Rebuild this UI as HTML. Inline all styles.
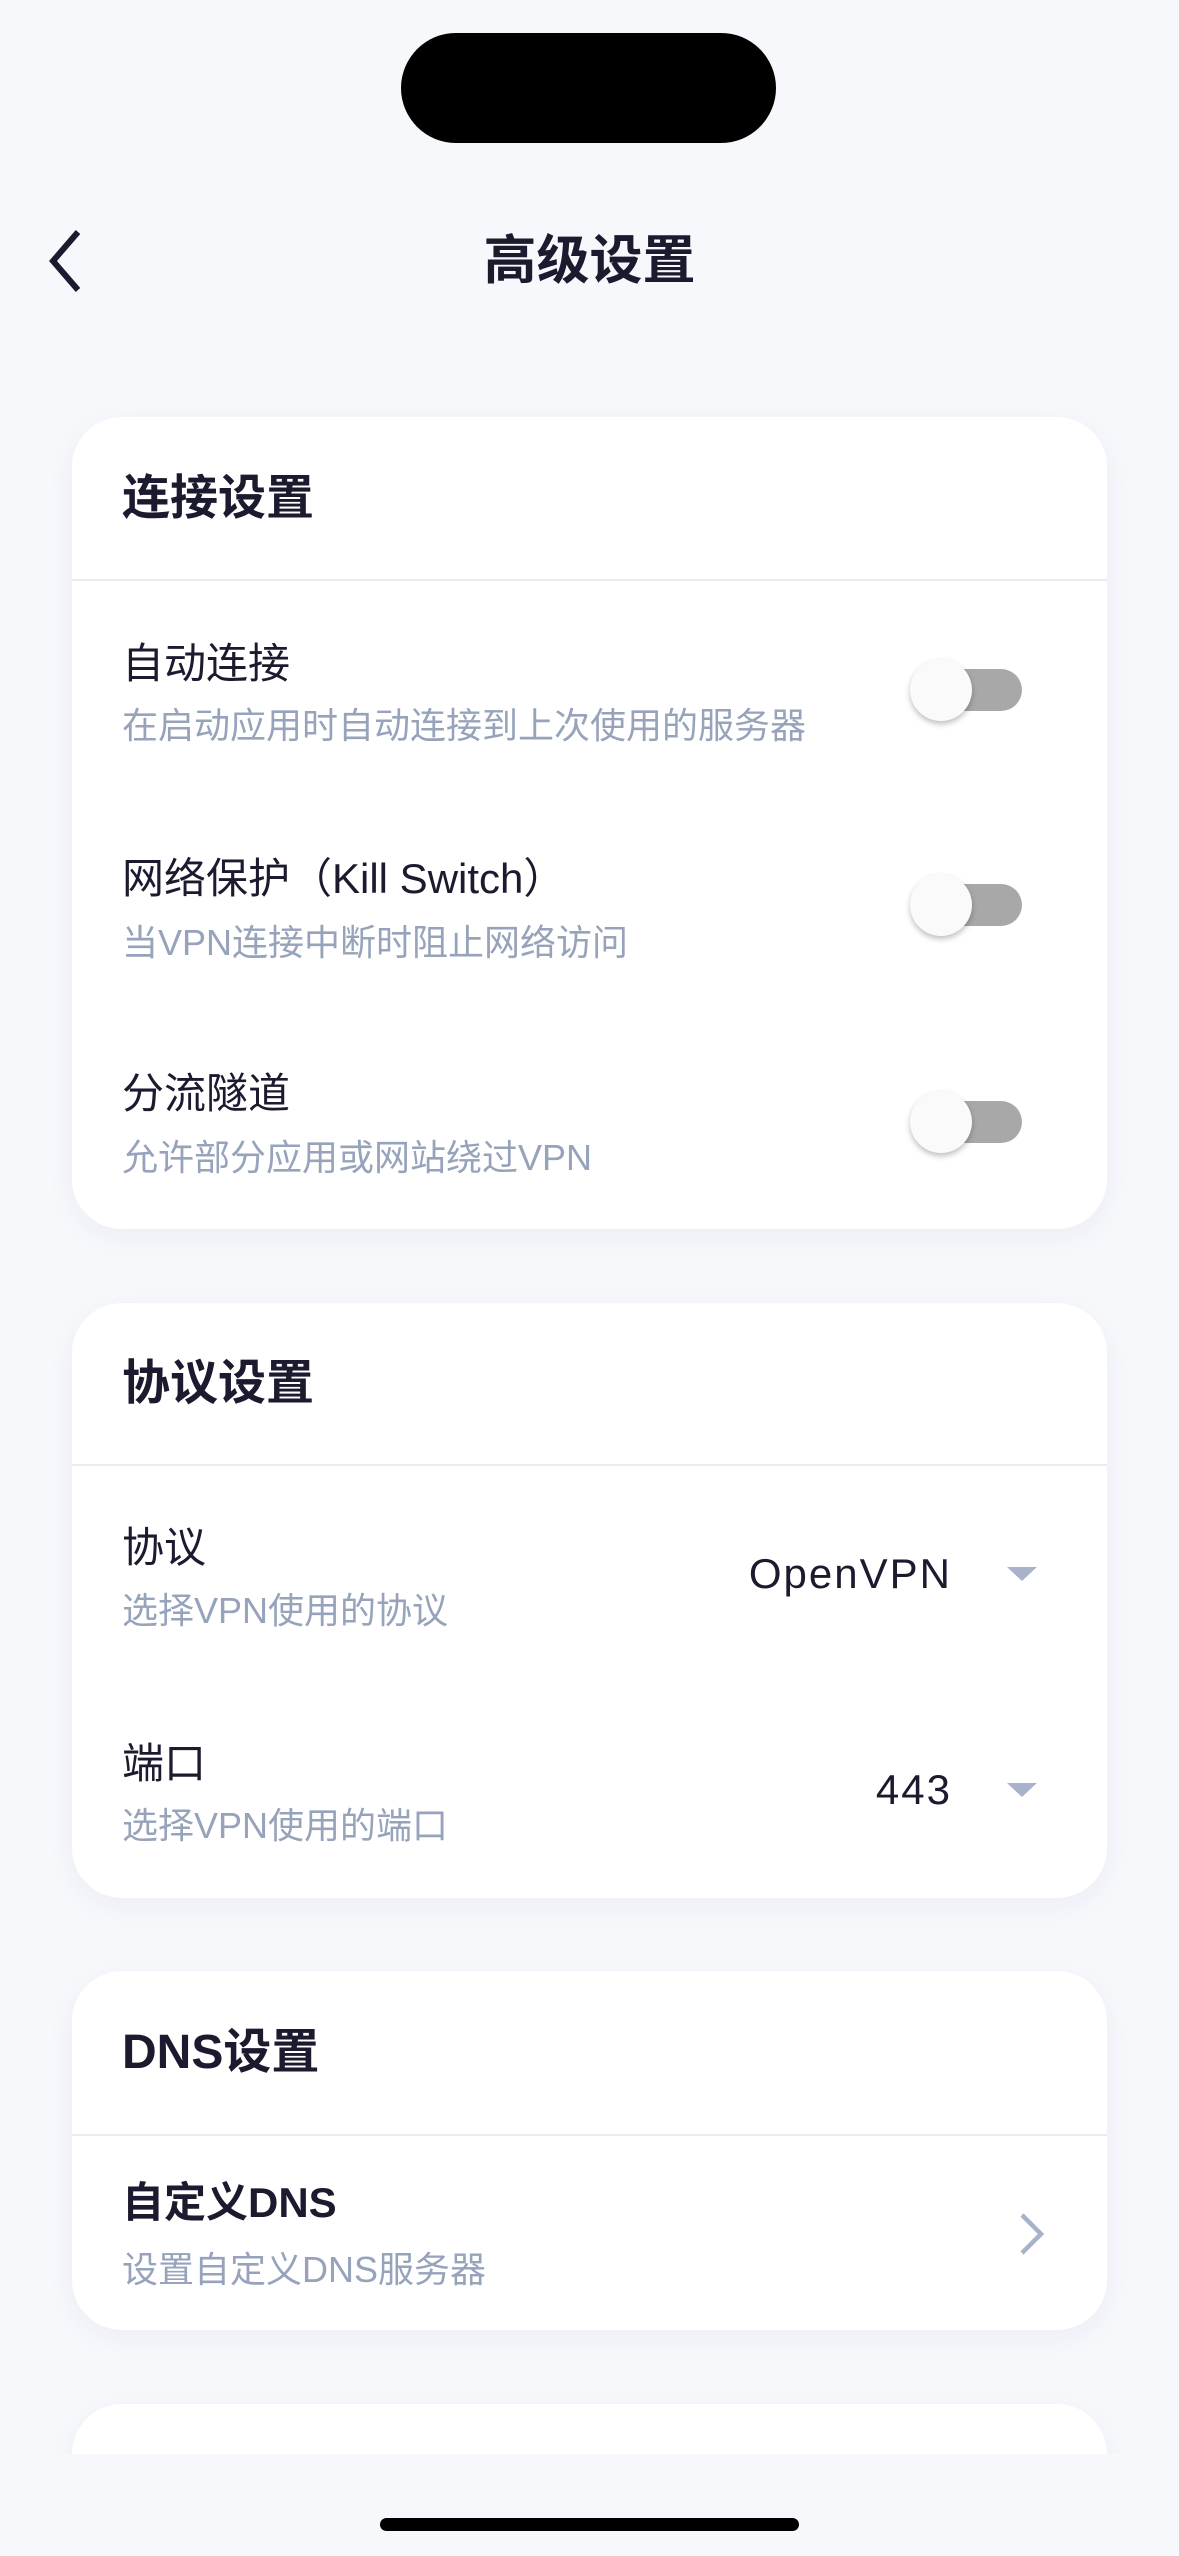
<!DOCTYPE html>
<html style="overflow:hidden;height:2556px"><head><meta charset="utf-8"><style>
*{margin:0;padding:0;box-sizing:border-box}
body{width:1179px;height:2556px;background:#f7f8fc;position:relative;overflow:hidden;font-family:"Liberation Sans","Noto Sans CJK SC",sans-serif;color:#1b1a2e}
.a{position:absolute}
.card{position:absolute;left:72px;width:1035px;background:#fff;border-radius:50px;box-shadow:0 8px 30px rgba(30,40,80,0.05)}
.h{position:absolute;left:50px;font-size:48px;font-weight:bold;line-height:1;transform:translateY(-50%)}
.div{position:absolute;left:0;right:0;height:2px;background:#ececf0}
.t{position:absolute;left:50px;font-size:42px;line-height:1;transform:translateY(-50%)}
.s{position:absolute;left:50px;font-size:36px;line-height:1;color:#97a3bb;transform:translateY(-50%)}
.trk{position:absolute;left:868px;width:82px;height:42px;border-radius:21px;background:#a8a8a8;transform:translateY(-50%)}
.knob{position:absolute;left:838px;width:62px;height:62px;border-radius:50%;background:#fafafa;box-shadow:0 3px 6px rgba(0,0,0,0.25);transform:translateY(-50%)}
.val{position:absolute;right:155px;font-size:42px;line-height:1;transform:translateY(-50%);letter-spacing:2px}
.tri{position:absolute;left:935px;width:0;height:0;border-left:15px solid transparent;border-right:15px solid transparent;border-top:14px solid #a9b2cb;transform:translateY(-50%)}
</style></head><body>
<div class="a" style="left:401px;top:33px;width:375px;height:110px;border-radius:55px;background:#000"></div>
<svg class="a" style="left:40px;top:228px" width="50" height="66" viewBox="0 0 50 66"><path d="M38 4 L13 33 L38 62" fill="none" stroke="#1b1a2e" stroke-width="6"/></svg>
<div class="a" style="left:0;width:1179px;top:261px;transform:translateY(-50%);text-align:center;font-size:53px;font-weight:bold;line-height:1">高级设置</div>

<div class="card" style="top:417px;height:812px">
<div class="h" style="top:82px">连接设置</div>
<div class="div" style="top:162px"></div>
<div class="t" style="top:247px">自动连接</div>
<div class="s" style="top:309px">在启动应用时自动连接到上次使用的服务器</div>
<div class="trk" style="top:273px"></div><div class="knob" style="top:273px"></div>
<div class="t" style="top:462px">网络保护（Kill Switch）</div>
<div class="s" style="top:526px">当VPN连接中断时阻止网络访问</div>
<div class="trk" style="top:488px"></div><div class="knob" style="top:488px"></div>
<div class="t" style="top:677px">分流隧道</div>
<div class="s" style="top:741px">允许部分应用或网站绕过VPN</div>
<div class="trk" style="top:705px"></div><div class="knob" style="top:705px"></div>
</div>

<div class="card" style="top:1303px;height:595px">
<div class="h" style="top:81px">协议设置</div>
<div class="div" style="top:161px"></div>
<div class="t" style="top:245px">协议</div>
<div class="s" style="top:308px">选择VPN使用的协议</div>
<div class="val" style="top:271px">OpenVPN</div><div class="tri" style="top:271px"></div>
<div class="t" style="top:461px">端口</div>
<div class="s" style="top:523px">选择VPN使用的端口</div>
<div class="val" style="top:487px">443</div><div class="tri" style="top:487px"></div>
</div>

<div class="card" style="top:1971px;height:359px">
<div class="h" style="top:82px">DNS设置</div>
<div class="div" style="top:163px"></div>
<div class="t" style="top:232px;font-weight:bold">自定义DNS</div>
<div class="s" style="top:299px">设置自定义DNS服务器</div>
<svg class="a" style="left:944px;top:240px" width="30" height="46" viewBox="0 0 30 46"><path d="M6 4 L25 23 L6 42" fill="none" stroke="#a9b2cb" stroke-width="4.5"/></svg>
</div>

<div class="card" style="top:2404px;height:100px"></div>
<div class="a" style="left:0;top:2454px;width:1179px;height:102px;background:#f7f8fc"></div>
<div class="a" style="left:380px;top:2518px;width:419px;height:13px;border-radius:7px;background:#000"></div>
</body></html>
